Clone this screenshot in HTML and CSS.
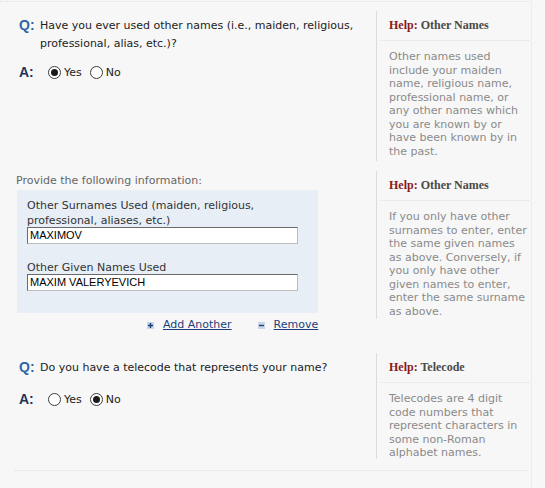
FILE: index.html
```html
<!DOCTYPE html>
<html>
<head>
<meta charset="utf-8">
<link rel="stylesheet" href="styles.css">
</head>
<body>
<div class="page">
  <div class="row">
    <div class="main">
      <div class="qline">
        <span class="q">Q:</span>
        <span class="qtext">Have you ever used other names (i.e., maiden, religious, professional, alias, etc.)?</span>
      </div>
      <div class="aline aline-tight">
        <span class="a">A:</span>
        <span class="radios">
          <span class="opt"><span class="radio checked"></span>Yes</span>
          <span class="opt"><span class="radio"></span>No</span>
        </span>
      </div>
    </div>
    <aside class="help help-1">
      <div class="help-title"><span class="help-label">Help:</span> Other Names</div>
      <p class="help-text">Other names used include your maiden name, religious name, professional name, or any other names which you are known by or have been known by in the past.</p>
    </aside>
  </div>

  <div class="row row-2">
    <div class="main">
      <div class="provide">Provide the following information:</div>
      <div class="box">
        <div class="field">
          <div class="field-label">Other Surnames Used (maiden, religious, professional, aliases, etc.)</div>
          <div class="input">MAXIMOV</div>
        </div>
        <div class="field">
          <div class="field-label">Other Given Names Used</div>
          <div class="input">MAXIM VALERYEVICH</div>
        </div>
      </div>
      <div class="links">
        <span class="link-item">
          <svg class="ico" width="7" height="7" viewBox="0 0 7 7"><rect x="0" y="0" width="7" height="7" fill="#c9d6e8"/><path d="M3.5 1v5M1 3.5h5" stroke="#1d3e7c" stroke-width="1.4"/></svg>
          <a class="link">Add Another</a>
        </span>
        <span class="link-item">
          <svg class="ico" width="7" height="7" viewBox="0 0 7 7"><rect x="0" y="0" width="7" height="7" fill="#c9d6e8"/><path d="M1 3.5h5" stroke="#1d3e7c" stroke-width="1.4"/></svg>
          <a class="link">Remove</a>
        </span>
      </div>
    </div>
    <aside class="help help-2">
      <div class="help-title"><span class="help-label">Help:</span> Other Names</div>
      <p class="help-text">If you only have other surnames to enter, enter the same given names as above. Conversely, if you only have other given names to enter, enter the same surname as above.</p>
    </aside>
  </div>

  <div class="row row-3">
    <div class="main">
      <div class="qline">
        <span class="q">Q:</span>
        <span class="qtext">Do you have a telecode that represents your name?</span>
      </div>
      <div class="aline">
        <span class="a">A:</span>
        <span class="radios">
          <span class="opt"><span class="radio"></span>Yes</span>
          <span class="opt"><span class="radio checked"></span>No</span>
        </span>
      </div>
    </div>
    <aside class="help help-3">
      <div class="help-title"><span class="help-label">Help:</span> Telecode</div>
      <p class="help-text">Telecodes are 4 digit code numbers that represent characters in some non-Roman alphabet names.</p>
    </aside>
  </div>

  <div class="divider"></div>
</div>
</body>
</html>
```
FILE: styles.css
```css
html, body {
  margin: 0;
  padding: 0;
  background: #f7f7f7;
}
body {
  font-family: "DejaVu Sans", Verdana, sans-serif;
  font-size: 11px;
  color: #222;
  overflow: hidden;
  height: 488px;
}
.page {
  width: 532px;
  border-top: 1px dotted #e2e2e2;
  border-right: 1px solid #ececec;
  margin-top: 1px;
  padding-top: 9px;
  min-height: 600px;
  box-sizing: border-box;
}
.row {
  display: grid;
  grid-template-columns: 376px 156px;
  align-items: start;
}
.row-2 { margin-top: 10px; }
.row-3 { margin-top: 21px; }

.main { min-width: 0; }

.qline {
  display: flex;
  align-items: flex-start;
  padding-left: 19px;
  padding-top: 7px;
}
.q {
  font-family: "Liberation Sans", Arial, sans-serif;
  font-weight: bold;
  font-size: 14px;
  color: #2f64a8;
  width: 21px;
  flex: none;
  line-height: 15px;
}
.qtext {
  line-height: 18px;
  margin-top: -1px;
  width: 320px;
}
.aline {
  display: flex;
  align-items: center;
  padding-left: 19px;
  margin-top: 14px;
}
.aline-tight { margin-top: 11px; }
.a {
  font-family: "Liberation Sans", Arial, sans-serif;
  font-weight: bold;
  font-size: 14px;
  color: #1e3558;
  width: 29px;
  flex: none;
}
.radios {
  display: flex;
  gap: 8px;
}
.opt {
  display: inline-flex;
  align-items: center;
  gap: 3px;
}
.radio {
  width: 11px;
  height: 11px;
  border: 1px solid #3c3c3c;
  border-radius: 50%;
  background: #fff;
  display: inline-flex;
  align-items: center;
  justify-content: center;
}
.radio.checked::after {
  content: "";
  width: 7px;
  height: 7px;
  border-radius: 50%;
  background: #1a1a1a;
}

.help {
  border-left: 1px solid #dcdcdc;
  padding-left: 12px;
  box-sizing: border-box;
}
.help-1 { height: 150px; }
.help-2 { height: 148px; }
.help-3 { height: 106px; }
.help-title {
  font-family: "Liberation Serif", "Times New Roman", serif;
  font-weight: bold;
  font-size: 12px;
  color: #4a4a4a;
  margin-top: 7px;
  margin-left: -9px;
  padding-left: 9px;
  padding-bottom: 7px;
  border-bottom: 1px dotted #e0e0e0;
  width: 140px;
}
.help-label { color: #8b1a1a; }
.help-text {
  margin: 9px 0 0;
  color: #8a8a8a;
  line-height: 13.5px;
  width: 141px;
}

.provide {
  color: #666;
  padding-left: 16px;
  margin-top: 3px;
  line-height: 14px;
}
.box {
  margin: 2px 0 0 17px;
  width: 301px;
  background: #e7eef6;
  padding: 8px 0 20px 10px;
  box-sizing: border-box;
  height: 123px;
}
.field + .field { margin-top: 16px; }
.field-label {
  color: #333;
  line-height: 15px;
  width: 250px;
}
.input {
  width: 271px;
  height: 17px;
  box-sizing: border-box;
  background: #fff;
  border: 1px solid;
  border-color: #6a6a6a #bdbdbd #bdbdbd #6a6a6a;
  font-family: "Liberation Sans", Arial, sans-serif;
  font-size: 11px;
  line-height: 15px;
  padding-left: 2px;
  color: #000;
  margin-top: -1px;
}

.links {
  display: flex;
  gap: 26px;
  padding-left: 147px;
  margin-top: 5px;
  line-height: 14px;
}
.link-item {
  display: inline-flex;
  align-items: center;
  gap: 9px;
}
.link {
  color: #1d3e7c;
  text-decoration: underline;
}

.divider {
  margin: 11px 0 0 15px;
  width: 513px;
  border-top: 1px dotted #dedede;
}
```
